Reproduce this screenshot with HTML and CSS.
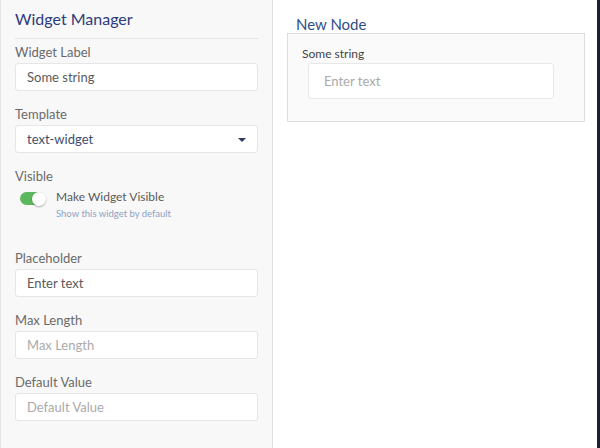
FILE: index.html
```html
<!DOCTYPE html>
<html>
<head>
<meta charset="utf-8">
<link rel="stylesheet" href="styles.css">
</head>
<body>
<div class="app">
  <aside class="sidebar">
    <h1 class="sidebar-title">Widget Manager</h1>
    <div class="field">
      <label class="label">Widget Label</label>
      <div class="input value">Some string</div>
    </div>
    <div class="field">
      <label class="label">Template</label>
      <div class="input select">
        <span>text-widget</span>
        <span class="caret"></span>
      </div>
    </div>
    <div class="field visible-field">
      <label class="label">Visible</label>
      <div class="toggle-row">
        <span class="toggle"><span class="knob"></span></span>
        <div class="toggle-text">
          <div class="toggle-title">Make Widget Visible</div>
          <div class="toggle-help">Show this widget by default</div>
        </div>
      </div>
    </div>
    <div class="field">
      <label class="label">Placeholder</label>
      <div class="input value">Enter text</div>
    </div>
    <div class="field">
      <label class="label">Max Length</label>
      <div class="input placeholder">Max Length</div>
    </div>
    <div class="field">
      <label class="label">Default Value</label>
      <div class="input placeholder">Default Value</div>
    </div>
  </aside>
  <main class="main">
    <h2 class="node-title">New Node</h2>
    <div class="node-box">
      <div class="node-label">Some string</div>
      <div class="node-input">Enter text</div>
    </div>
  </main>
</div>
</body>
</html>
```
FILE: styles.css
```css
* { box-sizing: border-box; }
html, body {
  margin: 0;
  padding: 0;
  width: 600px;
  height: 448px;
  overflow: hidden;
  background: #ffffff;
  font-family: Lato, "Open Sans", sans-serif;
}
.app {
  display: flex;
  width: 600px;
  height: 448px;
  border-right: 3px solid #1b2130;
}
.sidebar {
  width: 273px;
  flex: none;
  height: 100%;
  background: #f8f8f8;
  border-left: 1px solid #e4e4e4;
  border-right: 1px solid #e0e0e0;
  padding: 0 14px;
}
.sidebar-title {
  margin: 0;
  padding: 9px 0 9px;
  font-size: 16px;
  line-height: 20px;
  font-weight: 400;
  color: #2d3a7c;
  border-bottom: 1px solid #e6e6e6;
  margin-bottom: 4px;
}
.field {
  margin-bottom: 14px;
}
.label {
  display: block;
  font-size: 13px;
  line-height: 18px;
  color: #6a6a6a;
  margin-bottom: 2px;
}
.input {
  height: 28px;
  background: #ffffff;
  border: 1px solid #e6e6e6;
  border-radius: 3px;
  padding: 0 11px;
  font-size: 13px;
  line-height: 26px;
  color: #5a5a5a;
}
.placeholder { color: #aaaaaa; }
.select {
  display: flex;
  justify-content: space-between;
  align-items: center;
  color: #3e4d6d;
  padding-right: 11px;
}
.caret {
  width: 0;
  height: 0;
  border-left: 4px solid transparent;
  border-right: 4px solid transparent;
  border-top: 4px solid #2c3b5e;
  margin-top: 1px;
}
.visible-field { margin-bottom: 28px; }
.toggle-row {
  display: flex;
  align-items: flex-start;
  margin-top: 3px;
  padding-left: 5px;
}
.toggle {
  position: relative;
  width: 25px;
  height: 13px;
  margin-top: 4px;
  border-radius: 7px;
  background: #5cb85c;
  flex: none;
}
.knob {
  position: absolute;
  right: -1px;
  top: -0.5px;
  width: 14px;
  height: 14px;
  border-radius: 50%;
  background: #ffffff;
  box-shadow: 0 1px 2px rgba(0,0,0,0.3);
}
.toggle-text {
  margin-left: 11px;
}
.toggle-title {
  font-size: 12px;
  line-height: 17px;
  color: #5a5a5a;
}
.toggle-help {
  margin-top: 2px;
  font-size: 9.5px;
  line-height: 14px;
  color: #8ea2c4;
}
.main {
  flex: 1;
  padding: 15px 12px 0 14px;
}
.node-title {
  margin: 0 0 0 9px;
  font-size: 15px;
  line-height: 18px;
  font-weight: 400;
  color: #2f4f86;
}
.node-box {
  background: #fafafa;
  border: 1px solid #dedede;
  padding: 11px 14px 22px;
}
.node-label {
  font-size: 12px;
  line-height: 17px;
  color: #444444;
  margin-bottom: 1px;
}
.node-input {
  margin-left: 6px;
  width: 246px;
  height: 36px;
  background: #ffffff;
  border: 1px solid #e8e8e8;
  border-radius: 3px;
  padding: 0 15px;
  font-size: 13px;
  line-height: 34px;
  color: #aaaaaa;
}
```
